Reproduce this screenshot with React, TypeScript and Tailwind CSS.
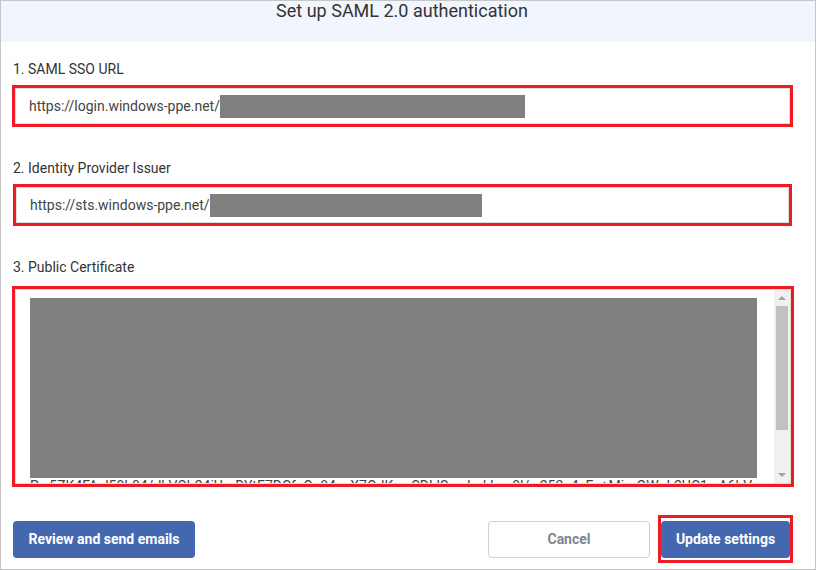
import { useState } from 'react';

const font = "font-['Roboto','Liberation_Sans',sans-serif]";

function UrlField({ prefix, redactWidth, boxClass }: { prefix: string; redactWidth: string; boxClass: string }) {
  return (
    <div className={`h-[42px] border-[3px] border-[#ed1c24] ${boxClass}`}>
      <div className="flex h-full items-center border border-[#dcdcdc] pl-[13px] text-[14px] text-[#444]">
        <span>{prefix}</span>
        <span className={`h-[23px] bg-[#808080] ${redactWidth}`} />
      </div>
    </div>
  );
}

function Scrollbar() {
  return (
    <div className="flex w-[16px] flex-col bg-[#f0f0f0]">
      <div className="flex h-[16px] items-center justify-center">
        <div className="h-0 w-0 border-x-[4px] border-b-[4px] border-x-transparent border-b-[#a3a3a3]" />
      </div>
      <div className="mx-[2px] h-[124px] bg-[#c1c1c1]" />
      <div className="flex-1" />
      <div className="flex h-[16px] items-center justify-center">
        <div className="h-0 w-0 border-x-[4px] border-t-[4px] border-x-transparent border-t-[#a3a3a3]" />
      </div>
    </div>
  );
}

export default function App() {
  const [cert] = useState(
    'Pw5ZK4FAsl50L04/dkVOb24iUmDYtE7DCfeOe84yuX7OdKgwSDLlSmvbnkLgv0l/w253e4zEz+MirnOWpL2UC1wA6bV'
  );

  return (
    <div className={`flex h-[570px] w-[816px] flex-col border border-[#c6c6c6] bg-white ${font}`}>
      {/* Header */}
      <div className="h-[41px] shrink-0 bg-[#f1f5fd] pr-[12px] text-center text-[18px] leading-[20px] text-[#333]">
        Set up SAML 2.0 authentication
      </div>

      {/* 1 */}
      <div className="ml-[12px] mt-[17px] text-[14px] leading-[20px] text-[#333]">1. SAML SSO URL</div>
      <UrlField
        prefix="https://login.windows-ppe.net/"
        redactWidth="w-[305px]"
        boxClass="ml-[11px] mt-[6px] w-[781px]"
      />

      {/* 2 */}
      <div className="ml-[12px] mt-[31px] text-[14px] leading-[20px] text-[#333]">2. Identity Provider Issuer</div>
      <UrlField
        prefix="https://sts.windows-ppe.net/"
        redactWidth="w-[272px]"
        boxClass="ml-[12px] mt-[6px] w-[779px]"
      />

      {/* 3 */}
      <div className="ml-[12px] mt-[31px] text-[14px] leading-[20px] text-[#333]">3. Public Certificate</div>
      <div className="ml-[11px] mt-[9px] h-[201px] w-[782px] border-[3px] border-[#ed1c24]">
        <div className="flex h-full border border-[#dcdcdc]">
          <div className="flex-1 overflow-hidden pl-[14px] pt-[8px]">
            <div className="h-[180px] w-[727px] bg-[#808080]" />
            <div className="-mt-[2px] whitespace-nowrap text-[14px] leading-[20px] text-[#444]">{cert}</div>
          </div>
          <Scrollbar />
        </div>
      </div>

      {/* Actions */}
      <div className="ml-[12px] mr-[22px] mt-[28px] flex h-[48px] items-center">
        <button className="h-[37px] w-[182px] rounded-[4px] bg-[#4468b0] text-[14px] font-bold text-white">
          Review and send emails
        </button>
        <div className="ml-auto flex items-center gap-[8px]">
          <button className="h-[37px] w-[162px] rounded-[4px] border border-[#d0d0d0] bg-white text-[14px] font-bold text-[#7c8791]">
            Cancel
          </button>
          <div className="h-[48px] w-[135px] border-[3px] border-[#ed1c24] pb-[2px] pt-[3px]">
            <button className="h-[37px] w-full rounded-[4px] bg-[#4468b0] text-[14px] font-bold text-white">
              Update settings
            </button>
          </div>
        </div>
      </div>
    </div>
  );
}
